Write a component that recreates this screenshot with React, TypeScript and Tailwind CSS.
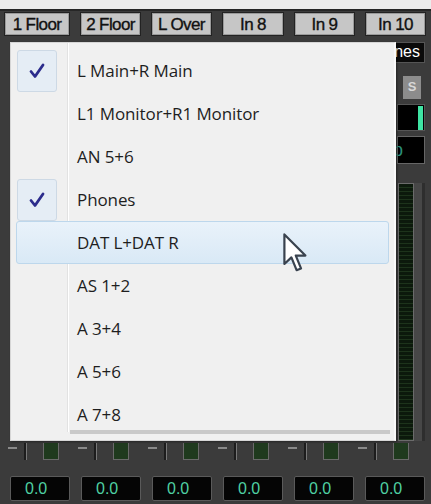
import React from 'react'

const buttons = [
  { label: '1 Floor', w: 'w-[66px]' },
  { label: '2 Floor', w: 'w-[61px]' },
  { label: 'L Over', w: 'w-[61px]' },
  { label: 'In 8', w: 'w-[62px]' },
  { label: 'In 9', w: 'w-[61px]' },
  { label: 'In 10', w: 'w-[61px]' },
]

const items = [
  { label: 'L Main+R Main', checked: true },
  { label: 'L1 Monitor+R1 Monitor' },
  { label: 'AN 5+6' },
  { label: 'Phones', checked: true },
  { label: 'DAT L+DAT R', hover: true },
  { label: 'AS 1+2' },
  { label: 'A 3+4' },
  { label: 'A 5+6' },
  { label: 'A 7+8' },
]

const Check = () => (
  <svg width="18" height="18" viewBox="0 0 18 18">
    <path d="M3 9.5 L7 14.5 L15 3" fill="none" stroke="#2c2c8c" strokeWidth="2.8" strokeLinejoin="round" strokeLinecap="round" />
  </svg>
)

const Cursor = () => (
  <svg width="26" height="40" viewBox="0 0 13 20" className="absolute left-[283px] top-[233px]">
    <path d="M0.7 0.7 L0.7 15.5 L4.2 12.2 L6.8 18.6 L9 17.7 L6.4 11.3 L11.2 11.3 Z" fill="#ffffff" stroke="#39424e" strokeWidth="1.1" strokeLinejoin="round" />
  </svg>
)

const FaderStub = () => (
  <div className="relative w-[70px] h-[30px]">
    <div className="absolute left-[8px] top-[6px] w-[9px] h-[2px] bg-[#8a8a8a]" />
    <div className="absolute left-[24px] top-[2px] w-[3px] h-[17px] bg-[#1c1c1c] border-r border-[#777]" />
    <div className="absolute left-[43px] top-[2px] w-[16px] h-[17px] bg-[#1f3a1e] border border-[#6a6a6a] border-t-0" />
  </div>
)

export default function App() {
  return (
    <div className="relative w-[431px] h-[504px] overflow-hidden bg-[#3b3b3b]" style={{ fontFamily: '"Liberation Sans", Arial, sans-serif' }}>
      <div className="h-[9px] bg-[#ececec]" />
      <div className="h-[2px] bg-[#262626]" />

      {/* channel name buttons */}
      <div className="flex gap-[10px] pl-[4px] pt-[1px]">
        {buttons.map((b) => (
          <div
            key={b.label}
            className={`${b.w} h-[24px] flex items-center justify-center bg-[#c6c6c6] border border-[#222] shadow-[inset_0_0_0_1px_#9a9a9a] text-[#111] text-[17px] leading-none tracking-[-0.6px] [-webkit-text-stroke:0.35px_#111]`}
          >
            {b.label}
          </div>
        ))}
      </div>

      {/* channel bodies (mostly covered by the menu) */}
      <div className="flex h-[405px] pt-[6px]">
        <div className="flex-1" />
        <div className="w-[68px] flex flex-col items-end pr-[6px] gap-[5px]">
          <div className="w-[62px] h-[21px] bg-[#0a0a0a] border border-[#555] flex items-center justify-end pr-[4px] text-white text-[16px] leading-none">
            Phones
          </div>
          <div className="flex justify-end w-full pr-[4px] mt-[8px]">
            <div className="w-[18px] h-[23px] bg-[#8c8c8c] flex items-center justify-center text-[#d8d8d8] text-[13px] font-bold">S</div>
          </div>
          <div className="w-[28px] h-[28px] bg-black border border-[#555] flex justify-end items-center pr-[1px]">
            <div className="w-[5px] h-[24px] bg-[#3fe3a3]" />
          </div>
          <div className="w-[28px] h-[28px] bg-black border border-[#666] flex items-center text-[#2b8f78] text-[18px] leading-none -ml-[4px]">
            <span className="-ml-[5px]">p</span>
          </div>
          <div className="flex w-full mt-[14px] flex-1">
            <div className="w-[35px]" />
            <div
              className="w-[16px] h-[258px] border border-[#6b6b6b]"
              style={{ background: 'repeating-linear-gradient(to bottom, #0c190c 0px, #0c190c 3px, #1d331b 3px, #1d331b 4px)' }}
            />
            <div className="flex-1 bg-[#474747] border-r-[3px] border-[#2e2e2e]" />
          </div>
        </div>
      </div>

      {/* fader stubs */}
      <div className="flex">
        {[0, 1, 2, 3, 4, 5].map((i) => (
          <FaderStub key={i} />
        ))}
      </div>

      {/* level displays */}
      <div className="flex pl-[10px] gap-[11px] mt-[5px]">
        {[0, 1, 2, 3, 4, 5].map((i) => (
          <div key={i} className="w-[60px] h-[25px] bg-[#050505] border border-[#5a5a5a] rounded-[2px] flex items-center pl-[14px] text-[#4fd0a2] text-[16px] leading-none">
            0.0
          </div>
        ))}
      </div>

      {/* popup menu */}
      <div
        className="absolute left-[10px] top-[42px] w-[386px] h-[399px] bg-[#f0f0f0] border border-[#d6d6d6] border-r-[2px] border-r-[#fafafa] shadow-[1px_1px_2px_rgba(0,0,0,0.4)]"
        style={{ fontFamily: '"Open Sans", "Noto Sans", sans-serif' }}
      >
        <div className="absolute left-[56px] top-0 bottom-[8px] w-[2px] bg-[#e2e2e2] border-r border-white" />
        <div className="relative flex flex-col pt-[6px] px-[5px]">
          {items.map((it) => (
            <div
              key={it.label}
              className={`relative h-[43px] flex items-center rounded-[3px] border ${
                it.hover ? 'border-[#bdd7ec] bg-[linear-gradient(to_bottom,#e9f2fa,#d9e9f6)]' : 'border-transparent'
              }`}
            >
              <div className="w-[52px] h-full flex items-center justify-start">
                {it.checked && (
                  <div className="w-[40px] h-[42px] flex items-center justify-center rounded-[3px] bg-[#e5edf5] border border-[#cdd9e5]">
                    <Check />
                  </div>
                )}
              </div>
              <span className="pl-[8px] text-[17px] text-[#1e1e1e] tracking-[-0.1px]">{it.label}</span>
            </div>
          ))}
        </div>
        <div className="absolute left-[59px] right-[4px] bottom-[6px] h-[4px] bg-[#c9c9c9]" />
      </div>

      <Cursor />
    </div>
  )
}
